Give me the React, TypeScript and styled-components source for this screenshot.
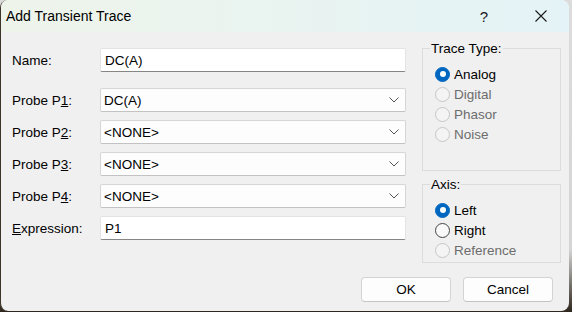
import * as React from "react";
import styled, { createGlobalStyle } from "styled-components";

const GlobalStyle = createGlobalStyle`
  html, body {
    margin: 0;
    padding: 0;
  }
  body {
    width: 572px;
    height: 312px;
    overflow: hidden;
    background: linear-gradient(to bottom, #dcdcdc 0%, #d4d4d4 80%, #2e261d 100%);
    font-family: "Liberation Sans", Arial, sans-serif;
  }
`;

const Window = styled.div`
  width: 569px;
  height: 311px;
  box-sizing: border-box;
  border-left: 1px solid #3d342a;
  border-radius: 8px;
  overflow: hidden;
  background: #f0f0f0;
  display: flex;
  flex-direction: column;
`;

const TitleBar = styled.div`
  height: 32px;
  flex: none;
  display: flex;
  align-items: center;
  padding-left: 5px;
  background: linear-gradient(to right, #eef4ea, #e4f3f7);
`;

const Title = styled.div`
  flex: 1;
  font-size: 14px;
  color: #000;
`;

const CaptionButton = styled.div<{ $w: number }>`
  width: ${(p) => p.$w}px;
  height: 32px;
  display: flex;
  align-items: center;
  justify-content: center;
  font-size: 15px;
  color: #1a1a1a;
`;

const Body = styled.div`
  flex: 1;
  display: flex;
  flex-direction: column;
  padding: 9px 8px 0 11px;
`;

const Main = styled.div`
  display: flex;
  align-items: flex-start;
  gap: 16px;
`;

const Form = styled.div`
  margin-top: 7px;
  width: 394px;
  display: grid;
  grid-template-columns: 88px 306px;
  grid-template-rows: 32px repeat(5, 24px);
  row-gap: 8px;
  align-items: start;
`;

const Label = styled.div`
  height: 24px;
  display: flex;
  align-items: center;
  font-size: 13.5px;
  color: #000;
  white-space: pre;
`;

const TextBox = styled.div`
  height: 24px;
  box-sizing: border-box;
  display: flex;
  align-items: center;
  padding-left: 4px;
  background: #fff;
  border: 1px solid #e3e3e3;
  border-bottom-color: #868686;
  border-radius: 2px;
  font-size: 13.5px;
  color: #000;
`;

const Combo = styled.div`
  height: 24px;
  box-sizing: border-box;
  display: flex;
  align-items: center;
  padding: 0 6px 0 3px;
  background: #fdfdfd;
  border: 1px solid #d6d6d6;
  border-bottom-color: #c2c2c2;
  border-radius: 2px;
  font-size: 13.5px;
  color: #000;
`;

const ComboText = styled.span`
  flex: 1;
`;

const Side = styled.div`
  width: 139px;
  display: flex;
  flex-direction: column;
  gap: 6px;
`;

const Group = styled.fieldset<{ $h: number }>`
  margin: 0;
  min-width: 0;
  height: ${(p) => p.$h}px;
  box-sizing: border-box;
  padding: 8px 0 0 12px;
  border: 1px solid #dcdcdc;
  display: flex;
  flex-direction: column;
`;

const Legend = styled.legend`
  padding: 0 1px;
  margin-left: -5px;
  font-size: 13.5px;
  line-height: 15px;
  color: #000;
`;

const RadioRow = styled.div<{ $disabled?: boolean }>`
  height: 20px;
  display: flex;
  align-items: center;
  gap: 4px;
  font-size: 13.5px;
  color: ${(p) => (p.$disabled ? "#6d6d6d" : "#000")};
`;

const RadioDot = styled.span<{ $checked?: boolean; $disabled?: boolean }>`
  width: 15px;
  height: 15px;
  box-sizing: border-box;
  border-radius: 50%;
  flex: none;
  display: flex;
  align-items: center;
  justify-content: center;
  background: ${(p) => (p.$checked ? "#0067c0" : p.$disabled ? "#f4f4f4" : "#f9f9f9")};
  border: 1px solid
    ${(p) => (p.$checked ? "#0067c0" : p.$disabled ? "#c6c6c6" : "#444")};

  &::after {
    content: "";
    display: ${(p) => (p.$checked ? "block" : "none")};
    width: 6px;
    height: 6px;
    border-radius: 50%;
    background: #fff;
  }
`;

const Buttons = styled.div`
  margin-top: 14px;
  padding-right: 8px;
  display: flex;
  justify-content: flex-end;
  gap: 12px;
`;

const Button = styled.div`
  width: 90px;
  height: 25px;
  box-sizing: border-box;
  display: flex;
  align-items: center;
  justify-content: center;
  background: #fdfdfd;
  border: 1px solid #d3d3d3;
  border-bottom-color: #c4c4c4;
  border-radius: 4px;
  font-size: 13.5px;
  color: #000;
`;

const Chevron = () => (
  <svg width="10" height="6" viewBox="0 0 10 6">
    <path d="M0.5 0.5 L5 5 L9.5 0.5" fill="none" stroke="#555" strokeWidth="1" />
  </svg>
);

const CloseIcon = () => (
  <svg width="12" height="12" viewBox="0 0 12 12">
    <path d="M0.5 0.5 L11.5 11.5 M11.5 0.5 L0.5 11.5" stroke="#1a1a1a" strokeWidth="1.1" />
  </svg>
);

interface Probe {
  key: string;
  value: string;
}

const probes: Probe[] = [
  { key: "1", value: "DC(A)" },
  { key: "2", value: "<NONE>" },
  { key: "3", value: "<NONE>" },
  { key: "4", value: "<NONE>" },
];

const traceTypes = [
  { label: "Analog", checked: true, disabled: false },
  { label: "Digital", checked: false, disabled: true },
  { label: "Phasor", checked: false, disabled: true },
  { label: "Noise", checked: false, disabled: true },
];

const axes = [
  { label: "Left", checked: true, disabled: false },
  { label: "Right", checked: false, disabled: false },
  { label: "Reference", checked: false, disabled: true },
];

export default () => {
  return (
    <>
      <GlobalStyle />
      <Window>
        <TitleBar>
          <Title>Add Transient Trace</Title>
          <CaptionButton $w={46}>?</CaptionButton>
          <CaptionButton $w={11} />
          <CaptionButton $w={46}>
            <CloseIcon />
          </CaptionButton>
          <CaptionButton $w={5} />
        </TitleBar>
        <Body>
          <Main>
            <Form>
              <Label>Name:</Label>
              <TextBox>DC(A)</TextBox>
              {probes.map(({ key, value }) => (
                <React.Fragment key={key}>
                  <Label>
                    Probe P<u>{key}</u>:
                  </Label>
                  <Combo>
                    <ComboText>{value}</ComboText>
                    <Chevron />
                  </Combo>
                </React.Fragment>
              ))}
              <Label>
                <u>E</u>xpression:
              </Label>
              <TextBox>P1</TextBox>
            </Form>
            <Side>
              <Group $h={130}>
                <Legend>Trace Type:</Legend>
                {traceTypes.map(({ label, checked, disabled }) => (
                  <RadioRow key={label} $disabled={disabled}>
                    <RadioDot $checked={checked} $disabled={disabled} />
                    {label}
                  </RadioRow>
                ))}
              </Group>
              <Group $h={86}>
                <Legend>Axis:</Legend>
                {axes.map(({ label, checked, disabled }) => (
                  <RadioRow key={label} $disabled={disabled}>
                    <RadioDot $checked={checked} $disabled={disabled} />
                    {label}
                  </RadioRow>
                ))}
              </Group>
            </Side>
          </Main>
          <Buttons>
            <Button>OK</Button>
            <Button>Cancel</Button>
          </Buttons>
        </Body>
      </Window>
    </>
  );
};
